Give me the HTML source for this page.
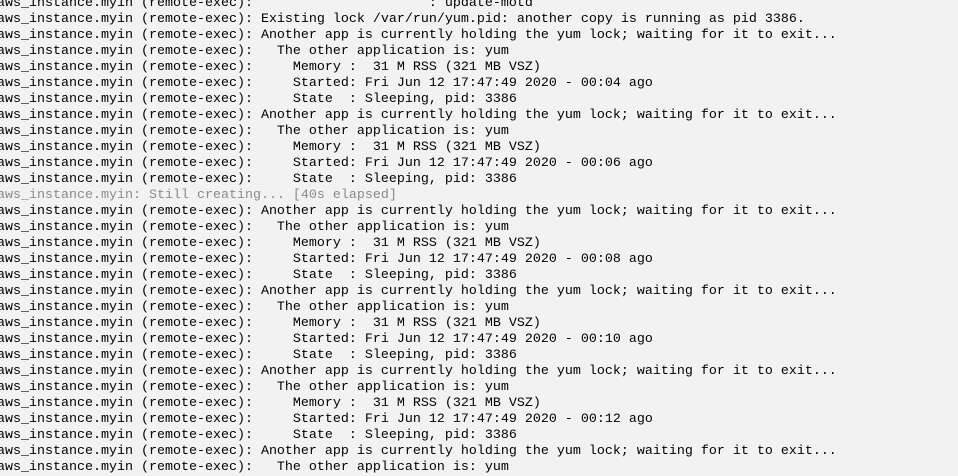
<!DOCTYPE html>
<html><head><style>
html,body{margin:0;padding:0;background:#f2f2f2;width:958px;height:474px;overflow:hidden}
pre{margin:0;position:absolute;left:-3px;top:-4px;font-family:"Liberation Mono",monospace;font-size:13.33px;line-height:16px;color:#000;white-space:pre}
.g{color:#8a8a8a}
</style></head><body><pre>aws_instance.myin (remote-exec):                      : update-motd
aws_instance.myin (remote-exec): Existing lock /var/run/yum.pid: another copy is running as pid 3386.
aws_instance.myin (remote-exec): Another app is currently holding the yum lock; waiting for it to exit...
aws_instance.myin (remote-exec):   The other application is: yum
aws_instance.myin (remote-exec):     Memory :  31 M RSS (321 MB VSZ)
aws_instance.myin (remote-exec):     Started: Fri Jun 12 17:47:49 2020 - 00:04 ago
aws_instance.myin (remote-exec):     State  : Sleeping, pid: 3386
aws_instance.myin (remote-exec): Another app is currently holding the yum lock; waiting for it to exit...
aws_instance.myin (remote-exec):   The other application is: yum
aws_instance.myin (remote-exec):     Memory :  31 M RSS (321 MB VSZ)
aws_instance.myin (remote-exec):     Started: Fri Jun 12 17:47:49 2020 - 00:06 ago
aws_instance.myin (remote-exec):     State  : Sleeping, pid: 3386
<span class="g">aws_instance.myin: Still creating... [40s elapsed]</span>
aws_instance.myin (remote-exec): Another app is currently holding the yum lock; waiting for it to exit...
aws_instance.myin (remote-exec):   The other application is: yum
aws_instance.myin (remote-exec):     Memory :  31 M RSS (321 MB VSZ)
aws_instance.myin (remote-exec):     Started: Fri Jun 12 17:47:49 2020 - 00:08 ago
aws_instance.myin (remote-exec):     State  : Sleeping, pid: 3386
aws_instance.myin (remote-exec): Another app is currently holding the yum lock; waiting for it to exit...
aws_instance.myin (remote-exec):   The other application is: yum
aws_instance.myin (remote-exec):     Memory :  31 M RSS (321 MB VSZ)
aws_instance.myin (remote-exec):     Started: Fri Jun 12 17:47:49 2020 - 00:10 ago
aws_instance.myin (remote-exec):     State  : Sleeping, pid: 3386
aws_instance.myin (remote-exec): Another app is currently holding the yum lock; waiting for it to exit...
aws_instance.myin (remote-exec):   The other application is: yum
aws_instance.myin (remote-exec):     Memory :  31 M RSS (321 MB VSZ)
aws_instance.myin (remote-exec):     Started: Fri Jun 12 17:47:49 2020 - 00:12 ago
aws_instance.myin (remote-exec):     State  : Sleeping, pid: 3386
aws_instance.myin (remote-exec): Another app is currently holding the yum lock; waiting for it to exit...
aws_instance.myin (remote-exec):   The other application is: yum</pre></body></html>
